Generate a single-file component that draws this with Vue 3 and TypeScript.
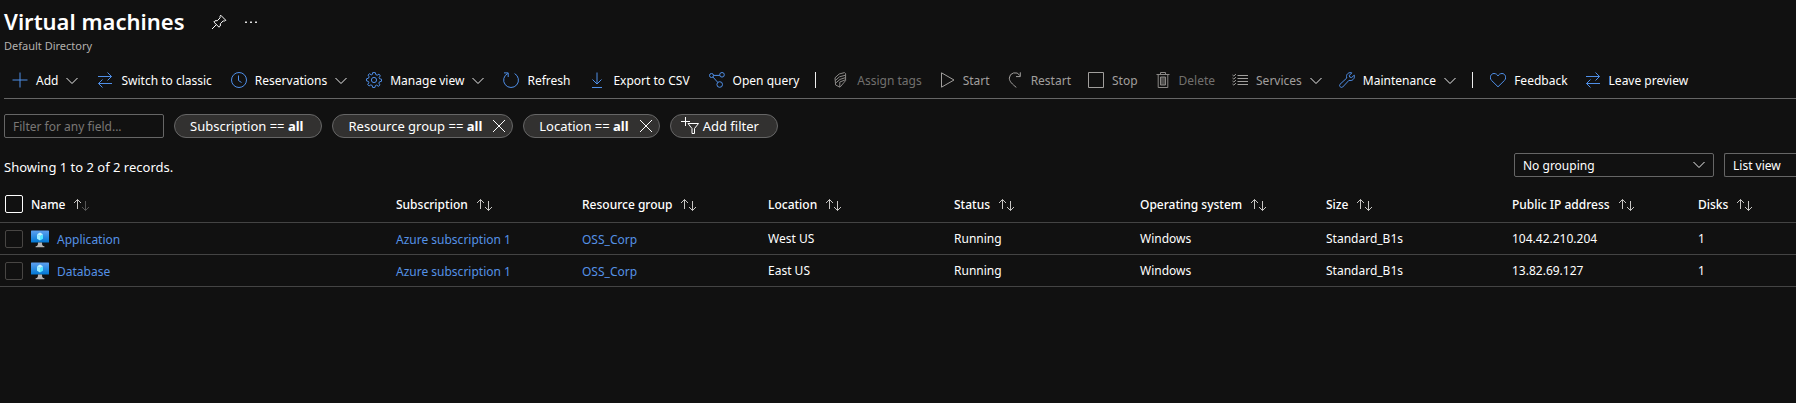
<script setup lang="ts">
import { ref } from 'vue'

type IconName =
  | 'add' | 'switch' | 'clock' | 'gear' | 'refresh' | 'download' | 'query'
  | 'tags' | 'play' | 'restart' | 'stop' | 'trash' | 'list' | 'wrench' | 'heart'

interface Command {
  label: string
  icon: IconName
  menu?: boolean
  state?: 'muted' | 'off'
}

const commandGroups: Command[][] = [
  [
    { label: 'Add', icon: 'add', menu: true },
    { label: 'Switch to classic', icon: 'switch' },
    { label: 'Reservations', icon: 'clock', menu: true },
    { label: 'Manage view', icon: 'gear', menu: true },
    { label: 'Refresh', icon: 'refresh' },
    { label: 'Export to CSV', icon: 'download' },
    { label: 'Open query', icon: 'query' },
  ],
  [
    { label: 'Assign tags', icon: 'tags', state: 'off' },
    { label: 'Start', icon: 'play', state: 'muted' },
    { label: 'Restart', icon: 'restart', state: 'muted' },
    { label: 'Stop', icon: 'stop', state: 'muted' },
    { label: 'Delete', icon: 'trash', state: 'off' },
    { label: 'Services', icon: 'list', menu: true, state: 'muted' },
    { label: 'Maintenance', icon: 'wrench', menu: true },
  ],
  [
    { label: 'Feedback', icon: 'heart' },
    { label: 'Leave preview', icon: 'switch' },
  ],
]

const icons: Record<IconName, string[]> = {
  add: ['M8 0.5V15.5M0.5 8H15.5'],
  switch: ['M1 4.5H14.5M10.5 0.5L14.5 4.5L10.5 8.5M15 11.5H1.5M5.5 7.5L1.5 11.5L5.5 15.5'],
  clock: ['M8 0.5A7.5 7.5 0 1 1 8 15.5A7.5 7.5 0 1 1 8 0.5ZM7.5 3.5V8.5L10.5 10.5'],
  gear: [
    'M6.7 0.6H9.3L9.8 2.6L11.2 3.2L13 2.1L14.3 3.9L13.1 5.5L13.6 6.8L15.5 7.2V9.3L13.5 9.8L12.9 11.2L14 12.9L12.3 14.3L10.7 13.1L9.4 13.6L8.9 15.5H6.7L6.2 13.5L4.8 12.9L3.1 14L1.7 12.3L2.9 10.8L2.4 9.4L0.5 8.9V6.8L2.5 6.2L3.1 4.8L2 3.1L3.7 1.7L5.2 2.9L6.4 2.4Z',
    'M8 5.4A2.6 2.6 0 1 1 8 10.6A2.6 2.6 0 1 1 8 5.4Z',
  ],
  refresh: ['M4.7 1.5A7.4 7.4 0 1 0 11.6 1.6M1 0.9H5.2V5'],
  download: ['M8 0.5V12M3.5 7.5L8 12L12.5 7.5M3 15.5H13'],
  query: [
    'M2.5 1.5A2 2 0 1 1 2.5 5.5A2 2 0 1 1 2.5 1.5ZM13 0.5A2.3 2.3 0 1 1 13 5.1A2.3 2.3 0 1 1 13 0.5Z',
    'M10.7 9.7A2.8 2.8 0 1 1 10.7 15.3A2.8 2.8 0 1 1 10.7 9.7ZM4.5 3.4H10.7M3.9 5L8.8 10.4',
  ],
  tags: [
    'M2 5.8L6.2 2L11.5 0.6L12.6 1.6V8.6L7 15.2L2.6 13Z',
    'M2.2 8.6L6.5 4.8L12.5 3.2M2.5 11.2L7 7.4L12.5 5.6M6.8 15V10L12.5 7.8',
  ],
  play: ['M2.5 0.8V15.2L15 8Z'],
  restart: ['M9.3 15.4C5.5 12.2 2.3 9.6 2.3 6.1A5.7 5.7 0 0 1 12.8 3.4M13.3 0.3V4.6H9'],
  stop: ['M0.5 0.5H15.5V15.5H0.5Z'],
  trash: ['M1.5 2.5H14.5M5.5 2.5V0.5H10.5V2.5M3.2 2.5V15.5H12.8V2.5', 'M6 5V13M8 5V13M10 5V13M5.5 5H10.5V13H5.5Z'],
  list: ['M5.5 3.5H16M5.5 6.5H16M5.5 9.5H16M5.5 12.5H16', 'M0.5 3L1.8 4.1L3.9 2M0.5 6L1.8 7.1L3.9 5M0.5 9L1.8 10.1L3.9 8M0.5 12L1.8 13.1L3.9 11'],
  wrench: ['M12.8 0.9C10.5 -0.1 7.4 1.7 7.5 4.4L7.8 6L1 12.3C-0.4 13.9 2 16.4 3.7 15L10 8.3C12.9 9.4 16.2 6.9 15.3 3.2L12.6 5.5L10.7 5.1L10.4 3.3Z'],
  heart: ['M8 14.8L1.5 8.4C-1.2 5.3 1.1 1.5 4 1.5C6 1.5 7.4 2.7 8 4C8.6 2.7 10 1.5 12 1.5C14.9 1.5 17.2 5.3 14.5 8.4Z'],
}

const columns = [
  'Name', 'Subscription', 'Resource group', 'Location', 'Status',
  'Operating system', 'Size', 'Public IP address', 'Disks',
]

const machines = [
  { name: 'Application', subscription: 'Azure subscription 1', group: 'OSS_Corp', rest: ['West US', 'Running', 'Windows', 'Standard_B1s', '104.42.210.204', '1'] },
  { name: 'Database', subscription: 'Azure subscription 1', group: 'OSS_Corp', rest: ['East US', 'Running', 'Windows', 'Standard_B1s', '13.82.69.127', '1'] },
]

const filters = ref([
  { field: 'Subscription', removable: false },
  { field: 'Resource group', removable: true },
  { field: 'Location', removable: true },
])

const removeFilter = (field: string) => {
  filters.value = filters.value.filter((f) => f.field !== field)
}

const query = ref('')
const selected = ref<string[]>([])
const toggleAll = (e: Event) => {
  selected.value = (e.target as HTMLInputElement).checked ? machines.map((m) => m.name) : []
}
</script>

<template>
  <main class="page">
    <header class="head">
      <div class="title-row">
        <h1>Virtual machines</h1>
        <button class="plain" type="button" aria-label="Pin to dashboard">
          <svg class="icon" viewBox="0 0 16 16"><path d="M9.7 1.2L14.8 6.3L13.5 7L12.2 6.9L9.4 9.7L9.3 12L8 13.2L2.8 8L4 6.8L6.3 6.7L9.1 3.9L9 2.5ZM5.4 10.6L1 15" /></svg>
        </button>
        <button class="plain" type="button" aria-label="More actions">
          <svg class="icon dots" viewBox="0 0 16 16"><path d="M2 7.5h2v1.5h-2zM7 7.5h2v1.5h-2zM12 7.5h2v1.5h-2z" /></svg>
        </button>
      </div>
      <p class="subtitle">Default Directory</p>
    </header>

    <nav class="toolbar" aria-label="Commands">
      <div v-for="(group, g) in commandGroups" :key="g" class="group">
        <button
          v-for="cmd in group"
          :key="cmd.label"
          type="button"
          class="command"
          :class="cmd.state"
        >
          <svg class="icon" viewBox="0 0 16 16"><path v-for="d in icons[cmd.icon]" :key="d" :d="d" /></svg>
          <span>{{ cmd.label }}</span>
          <svg v-if="cmd.menu" class="chevron" viewBox="0 0 12 8"><path d="M0.5 1L6 6.5L11.5 1" /></svg>
        </button>
      </div>
    </nav>

    <section class="filters" aria-label="Filters">
      <input v-model="query" class="search" type="text" placeholder="Filter for any field..." aria-label="Filter for any field" />
      <div v-for="f in filters" :key="f.field" class="pill" :class="{ closable: f.removable }">
        <button class="plain" type="button">{{ f.field }} == <b>all</b></button>
        <button v-if="f.removable" class="plain" type="button" :aria-label="`Remove ${f.field} filter`" @click="removeFilter(f.field)">
          <svg class="close" viewBox="0 0 14 14"><path d="M1 1L13 13M13 1L1 13" /></svg>
        </button>
      </div>
      <button class="pill add-filter" type="button">
        <svg class="funnel" viewBox="0 0 18 18"><path d="M4.5 0V9M0 4.5H9M7 6.5H17.5L13.5 11.5V16.5H11V11.5Z" /></svg>
        <span>Add filter</span>
      </button>
    </section>

    <section class="summary">
      <p>Showing 1 to 2 of 2 records.</p>
      <div class="views">
        <div class="select grouping">
          <select aria-label="Grouping"><option>No grouping</option></select>
          <svg class="chevron" viewBox="0 0 12 8"><path d="M0.5 1L6 6.5L11.5 1" /></svg>
        </div>
        <div class="select view">
          <select aria-label="View"><option>List view</option></select>
        </div>
      </div>
    </section>

    <table>
      <colgroup>
        <col class="c-check" />
        <col />
        <col v-for="n in 7" :key="n" class="c-data" />
        <col class="c-last" />
      </colgroup>
      <thead>
        <tr>
          <th class="check"><input type="checkbox" aria-label="Select all" @change="toggleAll" /></th>
          <th v-for="(col, i) in columns" :key="col" scope="col">
            <button class="plain sort" type="button">
              {{ col }}
              <svg class="arrows" :class="{ ascending: i === 0 }" viewBox="0 0 16 14">
                <path d="M4.5 11V1.5M1 5L4.5 1.5L8 5" />
                <path class="down" d="M12.5 3V12.5M9 9L12.5 12.5L16 9" />
              </svg>
            </button>
          </th>
        </tr>
      </thead>
      <tbody>
        <tr v-for="vm in machines" :key="vm.name">
          <td class="check"><input v-model="selected" type="checkbox" :value="vm.name" :aria-label="`Select ${vm.name}`" /></td>
          <td>
            <div class="name">
              <svg class="vm" viewBox="0 0 18 18">
                <defs>
                  <linearGradient id="vm-screen" x1="0" y1="1" x2="0" y2="0">
                    <stop offset="0" stop-color="#0078d4" />
                    <stop offset="1" stop-color="#5ea0ef" />
                  </linearGradient>
                </defs>
                <rect y="0.5" width="18" height="12" rx="0.6" fill="url(#vm-screen)" />
                <path d="M12 4.3V8.7L9 10.4V6Z" fill="#50e6ff" />
                <path d="M12 4.3L9 6L6 4.3L9 2.6Z" fill="#c3f1ff" />
                <path d="M9 6V10.4L6 8.7V4.3Z" fill="#9cebff" />
                <path d="M11 12.5H7C7 15.3 6.6 16 4.6 16.2V17.2H13.4V16.2C11.4 16 11 15.3 11 12.5Z" fill="#b3b3b3" />
              </svg>
              <a href="#">{{ vm.name }}</a>
            </div>
          </td>
          <td class="linked"><a href="#">{{ vm.subscription }}</a></td>
          <td class="linked"><a href="#">{{ vm.group }}</a></td>
          <td v-for="(value, i) in vm.rest" :key="i">{{ value }}</td>
        </tr>
      </tbody>
    </table>
  </main>
</template>

<style>
html,
body {
  background: #111;
}
body {
  margin: 0;
}
</style>

<style scoped>
.page {
  overflow: hidden;
  color: #fff;
  font: 12px/16px "Noto Sans", "Open Sans", sans-serif;
}
button,
input,
select {
  color: inherit;
  font: inherit;
}
svg {
  display: block;
  flex: none;
  fill: none;
  stroke: currentColor;
}
.plain {
  padding: 0;
  border: 0;
  background: none;
}
.icon {
  width: 16px;
  height: 16px;
}
.head {
  padding: 6px 4px 0;
}
.title-row {
  display: flex;
  align-items: center;
  gap: 12px;
}
h1 {
  margin: 0 14px 0 0;
  padding-bottom: 2px;
  font-size: 22px;
  line-height: 30px;
  font-weight: 600;
}
.dots {
  margin-left: 4px;
  fill: #ddd;
  stroke: none;
}
.subtitle {
  margin: 0;
  color: #b3b0ad;
  font-size: 11px;
}
.toolbar {
  display: flex;
  margin: 15px 0 0 4px;
  padding: 0 8px 5px;
  border-bottom: 1px solid #666;
}
.group {
  display: flex;
  gap: 17px;
}
.group:first-child {
  gap: 19px;
}
.group + .group {
  margin-left: 16px;
}
.group + .group::before {
  content: "";
  width: 1px;
  height: 16px;
  margin-top: 3px;
  background: #eee;
}
.command {
  display: flex;
  align-items: center;
  gap: 8px;
  padding: 0;
  border: 0;
  background: none;
  line-height: 24px;
  white-space: nowrap;
}
.command .icon {
  margin-bottom: 2px;
  color: #4f8fe8;
}
.command.muted,
.command.muted .icon {
  color: #a19f9d;
}
.command.off {
  color: #72706e;
}
.command.off .icon {
  color: #8a8886;
}
.chevron,
.command.muted .chevron {
  width: 12px;
  height: 8px;
  color: #eee;
}
.filters {
  display: flex;
  gap: 10px;
  margin: 15px 4px 0;
}
.search {
  box-sizing: border-box;
  width: 160px;
  height: 24px;
  padding: 0 8px;
  border: 1px solid #666;
  border-radius: 2px;
  background: transparent;
}
.search::placeholder {
  color: #797775;
  opacity: 1;
}
.pill {
  box-sizing: border-box;
  display: flex;
  align-items: center;
  height: 24px;
  padding: 0 18px 0 15px;
  border: 1px solid #666;
  border-radius: 12px;
  background: #323130;
  font-size: 13px;
  white-space: nowrap;
}
.pill.closable {
  gap: 10px;
  padding-right: 6px;
}
.close {
  width: 14px;
  height: 14px;
}
.add-filter {
  gap: 4px;
  padding: 0 18px 0 10px;
}
.funnel {
  width: 18px;
  height: 18px;
}
.summary {
  display: flex;
  align-items: center;
  justify-content: space-between;
  margin: 15px 0 0 4px;
}
.summary p {
  margin: 0;
  padding-top: 3px;
  font-size: 13px;
}
.views {
  display: flex;
  gap: 10px;
}
.select {
  position: relative;
}
.select select {
  box-sizing: border-box;
  width: 100%;
  height: 24px;
  padding: 2px 8px 0;
  border: 1px solid #666;
  border-radius: 2px;
  appearance: none;
  background: #111;
}
.select .chevron {
  position: absolute;
  top: 8px;
  right: 9px;
  pointer-events: none;
}
.grouping {
  width: 200px;
}
.view {
  width: 72px;
}
.view select {
  border-right: 0;
  border-radius: 2px 0 0 2px;
}
table {
  width: 100%;
  margin-top: 9px;
  border-collapse: collapse;
  table-layout: fixed;
}
.c-check {
  width: 31px;
}
.c-data {
  width: 186px;
}
.c-last {
  width: 98px;
}
th,
td {
  height: 31px;
  padding: 0;
  border-bottom: 1px solid #444;
  text-align: left;
  white-space: nowrap;
}
td:not(.check) {
  height: 30px;
  padding-top: 1px;
}
th {
  height: 36px;
}
.sort {
  display: flex;
  align-items: center;
  gap: 8px;
  padding-top: 1px;
  font-weight: 500;
}
.arrows {
  width: 16px;
  height: 14px;
  color: #c8c6c4;
}
.ascending .down {
  stroke: #555;
}
.check input {
  display: block;
  width: 18px;
  height: 18px;
  margin: 0 0 0 5px;
  border: 1px solid #484644;
  border-radius: 2px;
  box-sizing: border-box;
  appearance: none;
}
th.check input {
  border-color: #fff;
}
.check input:checked {
  background: #4f8fe8;
}
.name {
  display: flex;
  align-items: center;
  gap: 8px;
}
.vm {
  width: 18px;
  height: 18px;
  stroke: none;
}
a {
  color: #5592e6;
  text-decoration: none;
}
.name a,
.linked a {
  display: block;
  padding-top: 1px;
}
</style>
